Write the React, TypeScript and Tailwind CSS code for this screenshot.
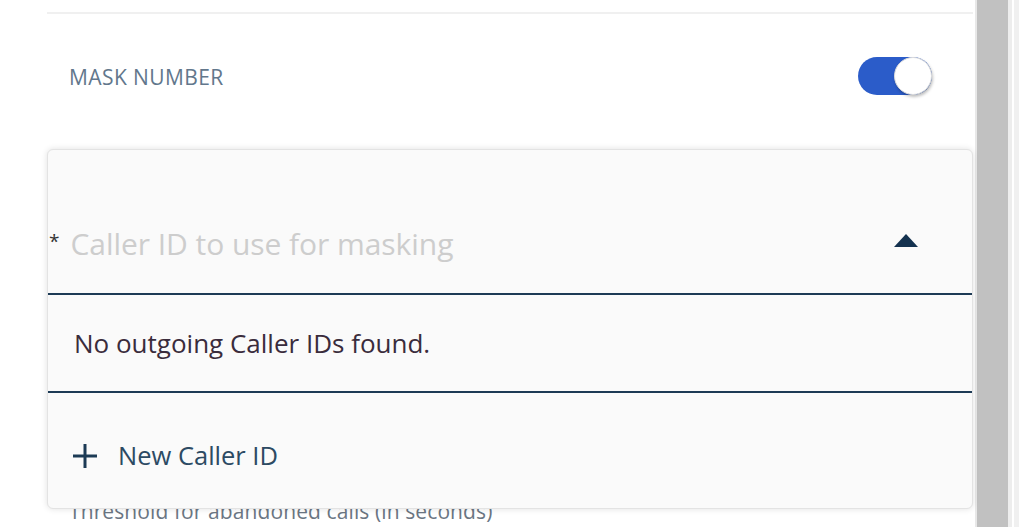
import React from "react";

export default function App() {
  return (
    <div className="flex h-[527px] w-[1019px] overflow-hidden bg-white" style={{ fontFamily: '"Open Sans", "Noto Sans", sans-serif' }}>
      <div className="relative flex-1">
        <div className="ml-[47px] mt-[12px] h-[2px] w-[926px] bg-[#f0f0f0]" />
        <div className="ml-[69px] mr-[43px] mt-[43px] flex items-center justify-between">
          <span className="pt-[2px] text-[21px] uppercase leading-none tracking-[0.4px] text-[#62778c]">Mask Number</span>
          <div className="flex h-[38px] w-[74px] items-center justify-end rounded-full bg-[#2b5cc9]">
            <div className="h-[38px] w-[38px] rounded-full border border-[#dddddd] bg-white shadow-[1px_2px_3px_rgba(0,0,0,0.25)]" />
          </div>
        </div>
        <div className="ml-[69px] mt-[406px] text-[21px] leading-none tracking-[0.1px] text-[#6b7683]">Threshold for abandoned calls (in seconds)</div>

        <div className="absolute left-[47px] top-[149px] flex h-[360px] w-[926px] flex-col rounded-[6px] border border-[#e3e3e3] bg-[#fafafa] shadow-[0_0_6px_rgba(0,0,0,0.12)]">
          <div className="flex h-[145px] items-end border-b-2 border-[#1d3a55] pb-[34px]">
            <div className="flex flex-1 items-center">
              <span className="ml-[1px] self-start pt-[3px] text-[19px] leading-none text-[#333333]">*</span>
              <span className="ml-[11px] text-[30px] leading-none tracking-[-0.05px] text-[#cdcdcd]">Caller ID to use for masking</span>
            </div>
            <svg width="26" height="15" viewBox="0 0 26 15" className="mb-[11px] mr-[53px]">
              <polygon points="13,1 25,14 1,14" fill="#14324f" />
            </svg>
          </div>
          <div className="flex h-[98px] items-center border-b-2 border-[#1d3a55] pl-[26px]">
            <span className="text-[26px] leading-none text-[#3a2c3c]">No outgoing Caller IDs found.</span>
          </div>
          <div className="flex flex-1 items-center pl-[23px] pt-[10px]">
            <svg width="28" height="28" viewBox="0 0 28 28">
              <path d="M14 2V26M2 14H26" stroke="#1c3a55" strokeWidth="3" />
            </svg>
            <span className="ml-[19px] text-[25.5px] leading-none text-[#2c4a63]">New Caller ID</span>
          </div>
        </div>
      </div>
      <div className="flex w-[44px] shrink-0">
        <div className="w-[2px] bg-[#e8e8e8]" />
        <div className="w-[31px] bg-[#c1c1c1]" />
        <div className="w-[4px] bg-[#ededed]" />
        <div className="w-[2px] bg-white" />
        <div className="w-[5px] bg-[#f0f0f0]" />
      </div>
    </div>
  );
}
